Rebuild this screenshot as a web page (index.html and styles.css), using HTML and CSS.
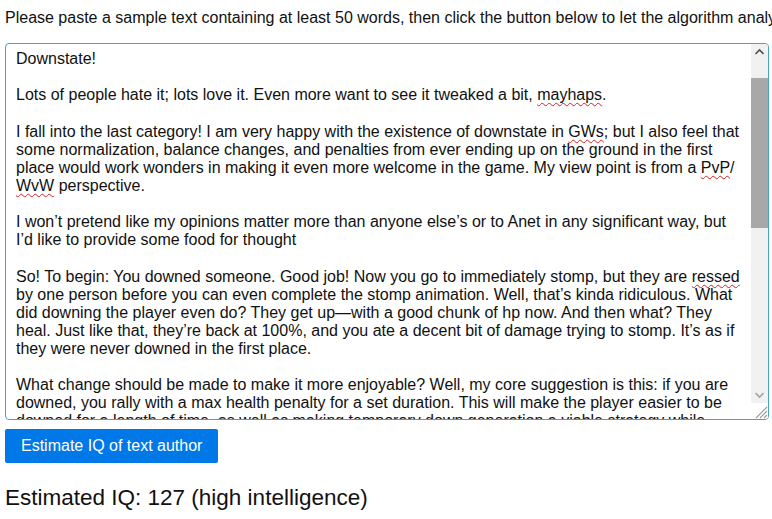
FILE: index.html
```html
<!DOCTYPE html>
<html lang="en">
<head>
    <meta charset="UTF-8">
    <meta name="viewport" content="width=device-width, initial-scale=1.0">
    <title>IQ estimator</title>
    <link rel="stylesheet" href="styles.css">
</head>
<body>
    <div class="page">
        <p class="intro">Please paste a sample text containing at least 50 words, then click the button below to let the algorithm analyze it.</p>

        <div class="editor">
            <div class="editor-text" contenteditable="true" spellcheck="false">
                <p>Downstate!</p>
                <p>Lots of people hate it; lots love it. Even more want to see it tweaked a bit, <span class="typo">mayhaps</span>.</p>
                <p>I fall into the last category! I am very happy with the existence of downstate in <span class="typo">GWs</span>; but I also feel that some normalization, balance changes, and penalties from ever ending up on the ground in the first place would work wonders in making it even more welcome in the game. My view point is from a <span class="typo">PvP</span>/<wbr><span class="typo">WvW</span> perspective.</p>
                <p>I won’t pretend like my opinions matter more than anyone else’s or to Anet in any significant way, but I’d like to provide some food for thought</p>
                <p>So! To begin: You downed someone. Good job! Now you go to immediately stomp, but they are <span class="typo">ressed</span> by one person before you can even complete the stomp animation. Well, that’s kinda ridiculous. What did downing the player even do? They get up—with a good chunk of hp now. And then what? They heal. Just like that, they’re back at 100%, and you ate a decent bit of damage trying to stomp. It’s as if they were never downed in the first place.</p>
                <p>What change should be made to make it more enjoyable? Well, my core suggestion is this: if you are downed, you rally with a max health penalty for a set duration. This will make the player easier to be downed for a length of time, as well as making temporary down generation a viable strategy while simultaneously rewarding the team that pulled off the rally in the first place.</p>
            </div>
            <div class="scrollbar">
                <span class="sb-button">
                    <svg width="17" height="17" viewBox="0 0 17 17"><polyline points="4.5,10 8.5,6 12.5,10" fill="none" stroke="#505050" stroke-width="1.6"/></svg>
                </span>
                <div class="sb-track"><div class="sb-thumb"></div></div>
                <span class="sb-button">
                    <svg width="17" height="17" viewBox="0 0 17 17"><polyline points="4.5,7 8.5,11 12.5,7" fill="none" stroke="#a3a3a3" stroke-width="1.6"/></svg>
                </span>
                <span class="sb-corner">
                    <svg width="17" height="16" viewBox="0 0 17 16"><path d="M16 4 L5 15 M16 8 L9 15 M16 12 L13 15" stroke="#9a9a9a" stroke-width="1.1"/></svg>
                </span>
            </div>
        </div>

        <button class="estimate-btn" type="button">Estimate IQ of text author</button>

        <p class="result">Estimated IQ: 127 (high intelligence)</p>
    </div>
</body>
</html>
```

FILE: styles.css
```css
* {
    box-sizing: border-box;
}

html, body {
    margin: 0;
    padding: 0;
    overflow: hidden;
    background: #fff;
}

body {
    font-family: "Liberation Sans", Arial, sans-serif;
    font-size: 16px;
    color: #111;
}

.page {
    display: flex;
    flex-direction: column;
    align-items: flex-start;
    padding: 9px 0 0 5px;
}

.intro {
    margin: 0 0 16px 0;
    white-space: nowrap;
    overflow: hidden;
    width: 100%;
}

.editor {
    display: flex;
    width: 764px;
    height: 377px;
    border: 1px solid #4a9fd5;
    border-radius: 4px;
    overflow: hidden;
    background: #fff;
}

.editor-text {
    flex: 1;
    padding: 6px 10px;
    overflow: hidden;
    outline: none;
    color: #111;
}

.editor-text p {
    margin: 0 0 18.4px 0;
}

.typo {
    text-decoration: underline wavy #d62020;
    text-decoration-thickness: 1px;
    text-decoration-skip-ink: none;
    text-underline-offset: 2px;
}

.scrollbar {
    display: flex;
    flex-direction: column;
    width: 17px;
    flex-shrink: 0;
}

.sb-button {
    display: block;
    height: 17px;
    background: #f1f1f1;
}

.sb-button svg,
.sb-corner svg {
    display: block;
}

.sb-track {
    flex: 1;
    background: #f1f1f1;
}

.sb-thumb {
    margin-top: 17px;
    height: 150px;
    background: #a8a8a8;
}

.sb-corner {
    display: block;
    height: 16px;
    background: #fff;
}

.estimate-btn {
    margin-top: 9px;
    font-family: inherit;
    font-size: 16px;
    line-height: normal;
    padding: 0.5em 1em;
    border: none;
    border-radius: 2px;
    background-color: rgb(0, 120, 231);
    color: #fff;
    cursor: pointer;
}

.estimate-btn:hover {
    background-color: rgb(0, 104, 204);
}

.result {
    margin: 22px 0 0 0;
    font-size: 22.5px;
    color: #111;
}
```
